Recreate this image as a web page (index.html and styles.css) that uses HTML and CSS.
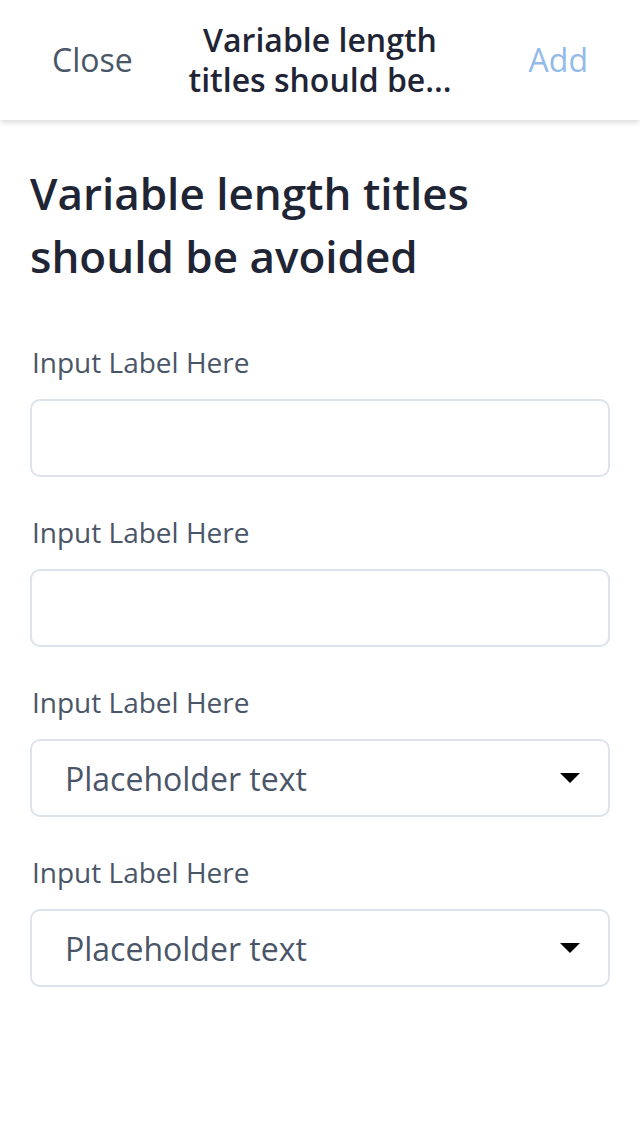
FILE: index.html
```html
<!DOCTYPE html>
<html>
<head>
<meta charset="utf-8">
<link rel="stylesheet" href="styles.css">
</head>
<body>
<header class="topbar">
  <button class="nav-btn nav-close">Close</button>
  <div class="nav-title">Variable length<br>titles should be...</div>
  <button class="nav-btn nav-add">Add</button>
</header>
<main class="content">
  <h1 class="page-title">Variable length titles should be avoided</h1>
  <div class="field">
    <label class="field-label">Input Label Here</label>
    <div class="input-box"></div>
  </div>
  <div class="field">
    <label class="field-label">Input Label Here</label>
    <div class="input-box"></div>
  </div>
  <div class="field">
    <label class="field-label">Input Label Here</label>
    <div class="input-box select-box">
      <span class="placeholder">Placeholder text</span>
      <span class="caret"></span>
    </div>
  </div>
  <div class="field">
    <label class="field-label">Input Label Here</label>
    <div class="input-box select-box">
      <span class="placeholder">Placeholder text</span>
      <span class="caret"></span>
    </div>
  </div>
</main>
</body>
</html>
```
FILE: styles.css
```css
html, body {
  margin: 0;
  padding: 0;
  background: #ffffff;
  font-family: "Open Sans", "Noto Sans", sans-serif;
}

.topbar {
  height: 120px;
  box-sizing: border-box;
  display: grid;
  grid-template-columns: 1fr auto 1fr;
  align-items: center;
  padding: 0 52px;
  background: #fff;
  box-shadow: 0 2px 6px rgba(0, 0, 0, 0.16);
  position: relative;
}

.nav-btn {
  border: 0;
  background: none;
  padding: 0;
  font-family: inherit;
  font-size: 32px;
  font-weight: 400;
  line-height: 40px;
}

.nav-close { color: #4a5668; justify-self: start; }
.nav-add { color: #93bbe8; justify-self: end; }

.nav-title {
  text-align: center;
  font-size: 32px;
  font-weight: 600;
  line-height: 40px;
  color: #1f2535;
}

.content {
  padding: 42px 30px 0 30px;
}

.page-title {
  margin: 0 0 57px 0;
  font-size: 44px;
  font-weight: 600;
  line-height: 63px;
  color: #1f2535;
  max-width: 480px;
}

.field {
  display: flex;
  flex-direction: column;
  margin-bottom: 38px;
}

.field-label {
  font-size: 28px;
  line-height: 34px;
  color: #4a5668;
  margin: 0 0 20px 2px;
}

.input-box {
  height: 78px;
  box-sizing: border-box;
  border: 2px solid #dde2ec;
  border-radius: 10px;
  background: #fff;
}

.select-box {
  display: flex;
  align-items: center;
  justify-content: space-between;
  padding: 0 28px 0 33px;
}

.placeholder {
  font-size: 32px;
  color: #4a5668;
}

.caret {
  width: 0;
  height: 0;
  border-left: 10px solid transparent;
  border-right: 10px solid transparent;
  border-top: 10px solid #000;
}
```
